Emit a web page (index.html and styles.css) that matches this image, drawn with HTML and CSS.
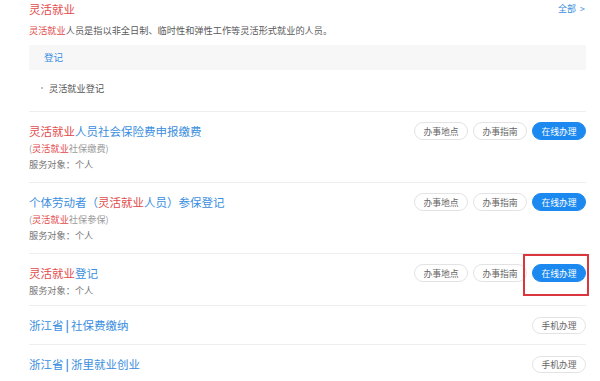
FILE: index.html
```html
<!DOCTYPE html>
<html lang="zh-CN">
<head>
<meta charset="utf-8">
<link rel="stylesheet" href="styles.css">
</head>
<body>
<div class="wrap">
  <div class="head">
    <div class="head-title">灵活就业</div>
    <a class="more">全部 &gt;</a>
  </div>
  <div class="desc"><span class="red">灵活就业</span>人员是指以非全日制、临时性和弹性工作等灵活形式就业的人员。</div>
  <div class="box">登记</div>
  <ul class="bullets">
    <li>灵活就业登记</li>
  </ul>

  <div class="item">
    <div class="info">
      <div class="title"><span class="red">灵活就业</span>人员社会保险费申报缴费</div>
      <div class="sub">(<span class="red">灵活就业</span>社保缴费)</div>
      <div class="meta">服务对象：个人</div>
    </div>
    <div class="actions">
      <span class="btn">办事地点</span>
      <span class="btn">办事指南</span>
      <span class="btn primary">在线办理</span>
    </div>
  </div>

  <div class="item">
    <div class="info">
      <div class="title">个体劳动者（<span class="red">灵活就业</span>人员）参保登记</div>
      <div class="sub">(<span class="red">灵活就业</span>社保参保)</div>
      <div class="meta">服务对象：个人</div>
    </div>
    <div class="actions">
      <span class="btn">办事地点</span>
      <span class="btn">办事指南</span>
      <span class="btn primary">在线办理</span>
    </div>
  </div>

  <div class="item item-short">
    <div class="info">
      <div class="title"><span class="red">灵活就业</span>登记</div>
      <div class="meta">服务对象：个人</div>
    </div>
    <div class="actions">
      <span class="btn">办事地点</span>
      <span class="btn">办事指南</span>
      <span class="btn primary marked">在线办理</span>
    </div>
  </div>

  <div class="item">
    <div class="info">
      <div class="title">浙江省<span class="bar">|</span>社保费缴纳</div>
    </div>
    <div class="actions">
      <span class="btn small">手机办理</span>
    </div>
  </div>

  <div class="item">
    <div class="info">
      <div class="title">浙江省<span class="bar">|</span>浙里就业创业</div>
    </div>
    <div class="actions">
      <span class="btn small">手机办理</span>
    </div>
  </div>
</div>
</body>
</html>
```

FILE: styles.css
```css
* { box-sizing: border-box; }
html, body { margin: 0; padding: 0; background: #fff; }
body {
  font-family: "Noto Sans CJK SC", "Noto Sans", sans-serif;
  color: #666;
  overflow: hidden;
}
.wrap {
  width: 557px;
  margin-left: 29px;
}
.red { color: #e34a4a; }
.head {
  display: flex;
  justify-content: space-between;
  align-items: center;
  height: 18px;
}
.head-title {
  font-size: 11.5px;
  line-height: 18px;
  color: #e34a4a;
}
.more {
  font-size: 9px;
  color: #3a8ee0;
  line-height: 16px;
  margin-right: 1px;
  word-spacing: 2px;
}
.desc {
  margin-top: 5px;
  font-size: 9.2px;
  line-height: 14px;
  color: #5a5a5a;
}
.box {
  margin-top: 8px;
  height: 25px;
  line-height: 25px;
  background: #f7f7f8;
  padding-left: 15px;
  font-size: 9.5px;
  color: #3a8ee0;
}
.bullets {
  list-style: none;
  margin: 0;
  padding: 11px 0 16px 12px;
}
.bullets li {
  display: flex;
  align-items: center;
  font-size: 9.2px;
  line-height: 14px;
  color: #555;
}
.bullets li::before {
  content: "";
  width: 2px;
  height: 2px;
  border-radius: 50%;
  background: #aaa;
  margin-right: 6px;
}
.item {
  display: flex;
  justify-content: space-between;
  align-items: flex-start;
  border-top: 1px solid #eee;
  padding: 10px 0 10px 0;
}
.item-short { padding-bottom: 7px; }
.title {
  font-size: 11.5px;
  line-height: 18px;
  color: #3a8ee0;
}
.bar {
  font-weight: bold;
  margin: 0 2px;
}
.sub {
  font-size: 9.2px;
  line-height: 16px;
  color: #999;
}
.meta {
  font-size: 9.2px;
  line-height: 16px;
  color: #777;
}
.actions {
  display: flex;
  gap: 5px;
}
.btn {
  display: flex;
  align-items: center;
  justify-content: center;
  width: 54px;
  height: 18px;
  border: 1px solid #e3e3e3;
  border-radius: 9px;
  font-size: 8.8px;
  color: #666;
  background: #fff;
}
.btn.primary {
  background: #1c89f0;
  border-color: #1c89f0;
  color: #fff;
}
.btn.small {
  height: 17px;
  margin-top: 1px;
}
.marked { position: relative; }
.marked::after {
  content: "";
  position: absolute;
  left: -10px;
  right: -4px;
  top: -11px;
  bottom: -15px;
  border: 2px solid #d9363e;
}
```
